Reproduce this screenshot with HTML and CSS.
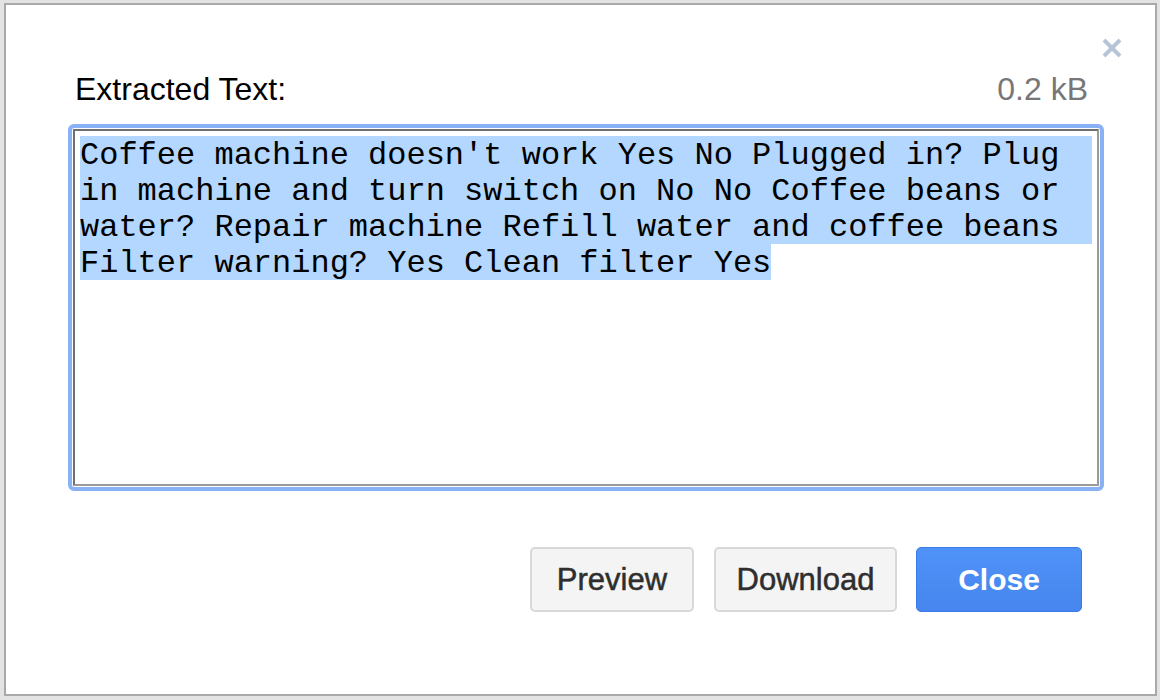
FILE: index.html
```html
<!DOCTYPE html>
<html lang="en">
<head>
<meta charset="utf-8">
<title>Extracted Text</title>
<link rel="stylesheet" href="styles.css">
</head>
<body>
<div class="dialog">
  <button class="close-x" aria-label="Close">
    <svg width="22" height="22" viewBox="0 0 22 22"><path d="M3 3 L19 19 M19 3 L3 19" stroke="#b7c4d6" stroke-width="4" stroke-linecap="butt" fill="none"/></svg>
  </button>
  <div class="header">
    <span class="label">Extracted Text:</span>
    <span class="size">0.2 kB</span>
  </div>
  <div class="textbox">
    <div class="line full">Coffee machine doesn't work Yes No Plugged in? Plug</div>
    <div class="line full">in machine and turn switch on No No Coffee beans or</div>
    <div class="line full">water? Repair machine Refill water and coffee beans</div>
    <div class="line"><span class="sel">Filter warning? Yes Clean filter Yes</span></div>
  </div>
  <div class="actions">
    <button class="btn btn-preview">Preview</button>
    <button class="btn btn-download">Download</button>
    <button class="btn btn-primary">Close</button>
  </div>
</div>
</body>
</html>
```
FILE: styles.css
```css
html, body {
  margin: 0;
  padding: 0;
}
body {
  background: #e3e3e3;
  width: 1160px;
  height: 700px;
  overflow: hidden;
  font-family: "Liberation Sans", Arial, sans-serif;
}
.dialog {
  position: relative;
  box-sizing: border-box;
  margin: 3px 0 0 4px;
  width: 1153px;
  height: 693px;
  border: 2px solid #a9a9a9;
  background: #ffffff;
  padding: 66px 56px 0 67px;
}
.close-x {
  position: absolute;
  top: 32px;
  right: 32px;
  width: 22px;
  height: 22px;
  padding: 0;
  margin: 0;
  border: 0;
  background: transparent;
  display: block;
}
.close-x svg {
  display: block;
}
.header {
  display: flex;
  justify-content: space-between;
  align-items: baseline;
  height: 36px;
  line-height: 36px;
  font-size: 32px;
  padding: 0 11px 0 2px;
}
.label {
  color: #000;
}
.size {
  color: #777777;
}
.textbox {
  box-sizing: border-box;
  margin-top: 22px;
  height: 357px;
  border: 2px solid;
  border-color: #6f6f6f #9a9a9a #9a9a9a #6f6f6f;
  outline: 4px solid #88b1f6;
  outline-offset: 1px;
  border-radius: 1px;
  padding: 5px;
  font-family: "Liberation Mono", "Courier New", monospace;
  font-size: 32px;
  line-height: 33px;
  color: #000;
}
.line {
  box-sizing: border-box;
  height: 36px;
  padding-top: 3px;
  white-space: pre;
}
.line.full {
  background: #b3d7fe;
}
.sel {
  display: inline-block;
  box-sizing: border-box;
  background: #b3d7fe;
  height: 36px;
  margin-top: -3px;
  padding-top: 3px;
  vertical-align: top;
}
.actions {
  display: flex;
  justify-content: flex-end;
  margin-top: 61px;
  padding-right: 17px;
}
.btn {
  box-sizing: border-box;
  height: 65px;
  border-radius: 5px;
  font-family: "Liberation Sans", Arial, sans-serif;
  font-size: 31px;
  padding: 0;
  margin: 0;
}
.btn-preview,
.btn-download {
  border: 2px solid #d8d8d8;
  background: #f4f4f4;
  color: #2e2e2e;
  -webkit-text-stroke: 0.5px #2e2e2e;
}
.btn-preview {
  width: 164px;
}
.btn-download {
  width: 183px;
  margin-left: 20px;
}
.btn-primary {
  width: 166px;
  margin-left: 19px;
  border: 1px solid #3a7be6;
  background: linear-gradient(#4f92f8, #4686ee);
  color: #ffffff;
  font-weight: bold;
  font-size: 30px;
}
```
